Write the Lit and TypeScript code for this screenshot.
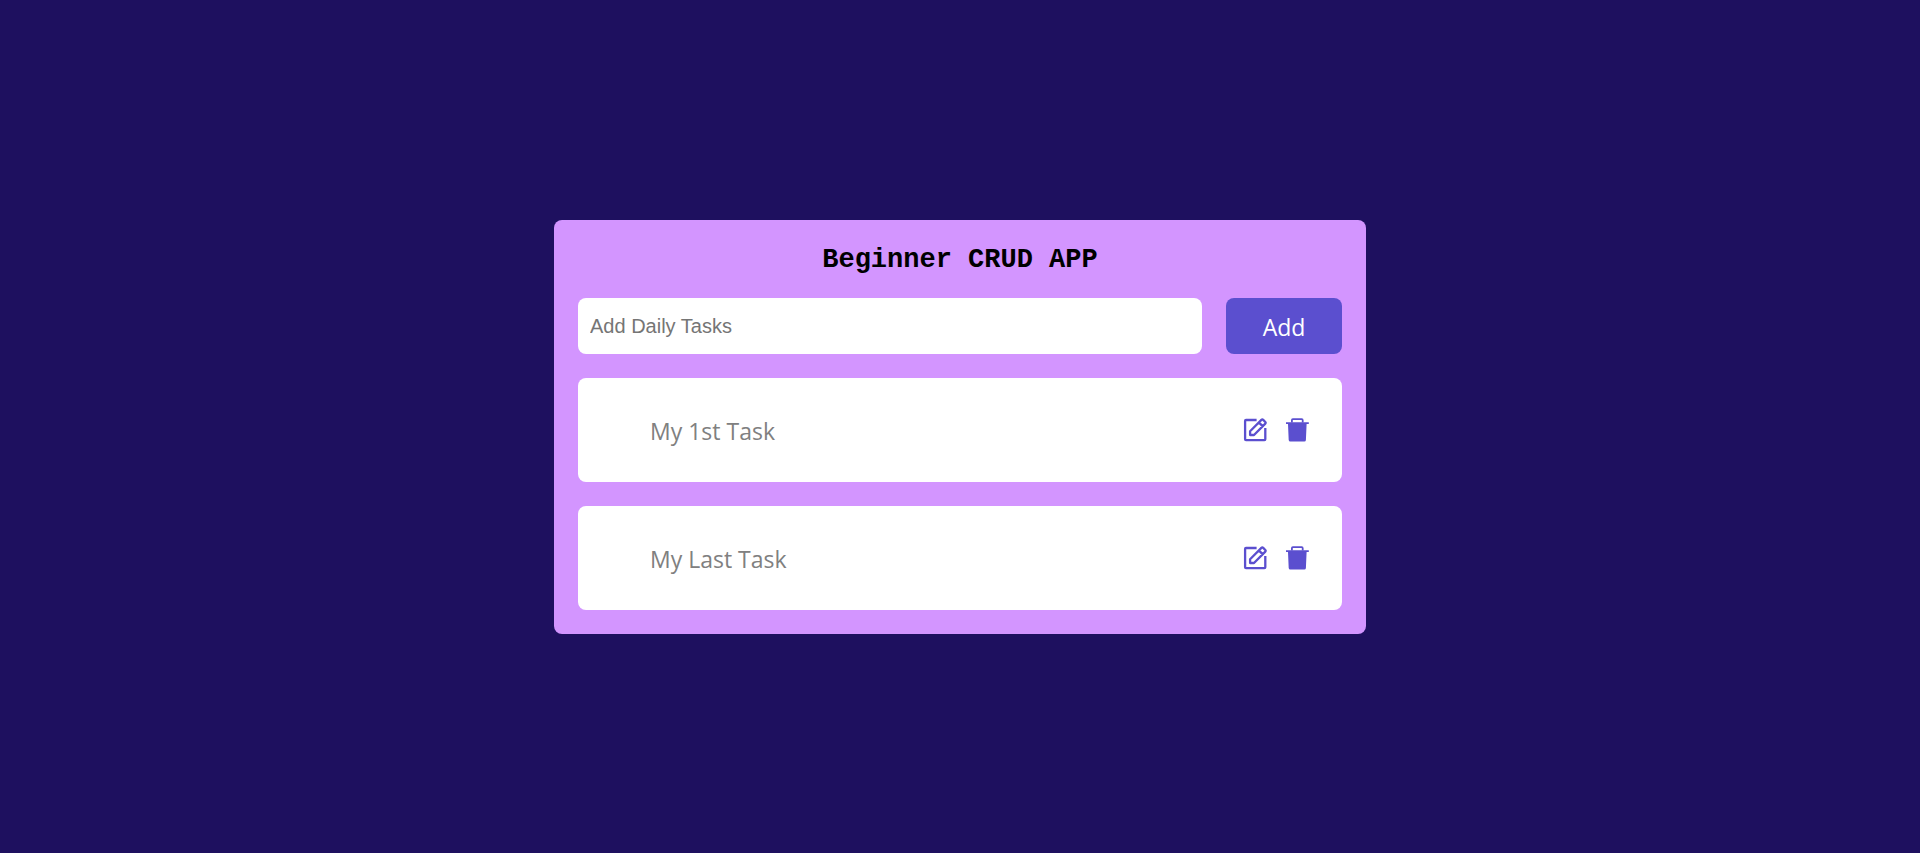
import { LitElement, html, css } from "lit";
import { customElement, state } from "lit/decorators.js";

@customElement("app-root")
export class AppRoot extends LitElement {
  static styles = css`
    :host {
      display: flex;
      align-items: center;
      justify-content: center;
      box-sizing: border-box;
      min-height: 100vh;
      background: #1e105f;
      font-family: "Open Sans", "Noto Sans", sans-serif;
    }
    .panel {
      display: flex;
      flex-direction: column;
      gap: 24px;
      box-sizing: border-box;
      width: 100%;
      max-width: 812px;
      padding: 24px;
      border-radius: 8px;
      background: #d395ff;
    }
    .title {
      margin: 0;
      padding-top: 2px;
      font-family: "Courier New", "Liberation Mono", monospace;
      font-size: 27px;
      font-weight: 600;
      line-height: 28px;
      text-align: center;
      color: #000;
    }
    .form {
      display: flex;
      gap: 24px;
    }
    .field {
      flex: 1;
      min-width: 0;
      height: 56px;
      box-sizing: border-box;
      padding: 2px 12px 0;
      border: 0;
      border-radius: 8px;
      background: #fff;
      font-family: "Liberation Sans", Arial, sans-serif;
      font-size: 20px;
    }
    .field::placeholder {
      color: #757575;
    }
    .add {
      width: 116px;
      height: 56px;
      padding: 2px 0 0;
      border: 0;
      border-radius: 8px;
      background: #5b4fcf;
      color: #fff;
      font-family: inherit;
      font-size: 23px;
      cursor: pointer;
    }
    .list {
      display: flex;
      flex-direction: column;
      gap: 24px;
      margin: 0;
      padding: 0;
      list-style: none;
    }
    .task {
      display: flex;
      align-items: center;
      justify-content: space-between;
      min-height: 104px;
      box-sizing: border-box;
      padding: 0 33px 0 72px;
      border-radius: 8px;
      background: #fff;
    }
    .name {
      padding-top: 2px;
      font-size: 23px;
      line-height: 32px;
      color: #808080;
    }
    .actions {
      display: flex;
      gap: 18px;
    }
    .icon {
      display: block;
      padding: 0;
      border: 0;
      background: none;
      color: #5b4fcf;
      cursor: pointer;
    }
    .icon svg {
      display: block;
    }
  `;

  @state() private tasks = ["My 1st Task", "My Last Task"];

  private add(e: Event) {
    e.preventDefault();
    const field = this.renderRoot.querySelector("input")!;
    const name = field.value.trim();
    if (!name) return;
    this.tasks = [...this.tasks, name];
    field.value = "";
  }

  private edit(index: number) {
    const name = window.prompt("Edit task", this.tasks[index]);
    if (name) this.tasks = this.tasks.map((t, i) => (i === index ? name : t));
  }

  private remove(index: number) {
    this.tasks = this.tasks.filter((_, i) => i !== index);
  }

  render() {
    return html`
      <main class="panel">
        <h1 class="title">Beginner CRUD APP</h1>
        <form class="form" @submit=${this.add}>
          <input class="field" type="text" aria-label="Add Daily Tasks" placeholder="Add Daily Tasks" />
          <button class="add" type="submit">Add</button>
        </form>
        <ul class="list">
          ${this.tasks.map(
            (task, i) => html`
              <li class="task">
                <span class="name">${task}</span>
                <div class="actions">
                  <button class="icon" type="button" aria-label="Edit" @click=${() => this.edit(i)}>
                    <svg width="24" height="24" viewBox="0 0 24 24" fill="none" stroke="currentColor" stroke-width="2.3">
                      <path d="M13.6 2H3Q2.1 2 2.1 2.9V21.2Q2.1 22.1 3 22.1H21.4Q22.3 22.1 22.3 21.2V10" />
                      <path d="M7.1 17V13.2L18.4 1.9Q19.3 1 20.2 1.9L22.3 4Q23.1 4.8 22.3 5.6L11 17ZM15.8 4.4L19.8 8.4" stroke-linejoin="round" />
                    </svg>
                  </button>
                  <button class="icon" type="button" aria-label="Delete" @click=${() => this.remove(i)}>
                    <svg width="24" height="24" viewBox="0 0 24 24" fill="currentColor">
                      <path d="M6.9 4.6V2.2Q6.9 1.2 7.9 1.2H16.7Q17.7 1.2 17.7 2.2V4.6" fill="none" stroke="currentColor" stroke-width="1.8" />
                      <path d="M1 4.2H23.8V6.1H21.6L20.9 22.1Q20.8 23.6 19.3 23.6H5.3Q3.8 23.6 3.7 22.1L3 6.1H1Z" />
                    </svg>
                  </button>
                </div>
              </li>
            `
          )}
        </ul>
      </main>
    `;
  }
}
